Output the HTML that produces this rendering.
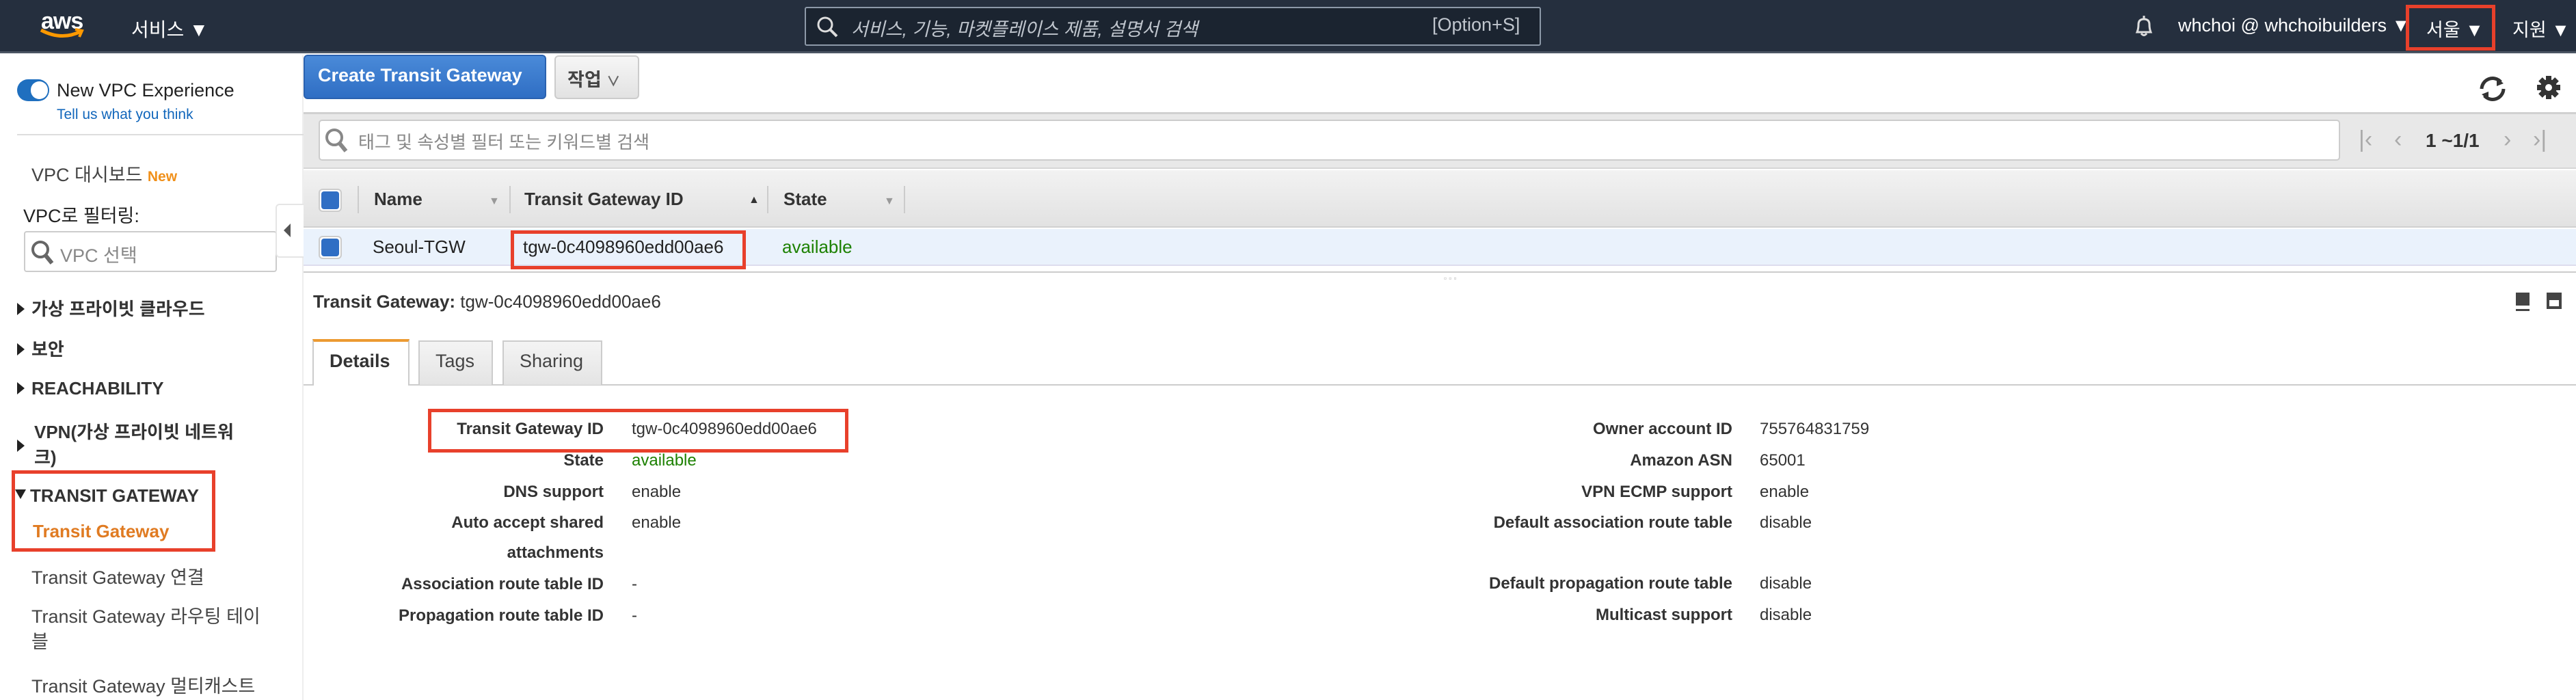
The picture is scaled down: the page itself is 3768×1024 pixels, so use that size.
<!DOCTYPE html>
<html><head><meta charset="utf-8"><style>
*{margin:0;padding:0;box-sizing:border-box}
body{width:3768px;height:1024px;overflow:hidden;background:#fff;font-family:"Liberation Sans","Noto Sans CJK KR",sans-serif;color:#222;position:relative}
.a{position:absolute;white-space:nowrap}
.nav{left:0;top:0;width:3768px;height:78px;background:#252f3e;border-bottom:3px solid #4b5563}
.w{color:#fff}
.side{left:0;top:81px;width:444px;height:943px;border-right:2px solid #eee}
.si{font-size:27px;color:#444}
.sb{font-size:26px;font-weight:bold;color:#333}
.tri{display:inline-block;width:0;height:0;border-top:9px solid transparent;border-bottom:9px solid transparent;border-left:11px solid #222;margin-right:10px}
.red{border:5px solid #e8402b}
.lbl{font-size:24px;font-weight:bold;color:#333;text-align:right}
.val{font-size:24px;color:#333}
</style></head><body>
<div class="a nav"></div>
<div class="a w" style="left:60px;top:12px;font-size:34px;font-weight:bold;letter-spacing:-1px">aws</div>
<svg class="a" style="left:56px;top:40px" width="70" height="20"><path d="M4 4 Q34 20 62 6" stroke="#f90" stroke-width="5" fill="none"/><path d="M54 3 L64 5 L60 14" stroke="#f90" stroke-width="4" fill="none"/></svg>
<div class="a w" style="left:192px;top:22px;font-size:28px">서비스 ▼</div>
<div class="a" style="left:1177px;top:10px;width:1077px;height:57px;border:2px solid #8d99a8;border-radius:3px;background:#1b2430"></div>
<svg class="a" style="left:1193px;top:22px" width="34" height="34"><circle cx="14" cy="14" r="10" stroke="#ddd" stroke-width="3" fill="none"/><path d="M21 21 L31 31" stroke="#ddd" stroke-width="4"/></svg>
<div class="a" style="left:1245px;top:21px;font-size:27px;color:#c0c6ce;font-style:italic">서비스, 기능, 마켓플레이스 제품, 설명서 검색</div>
<div class="a" style="left:2095px;top:21px;font-size:27px;color:#c0c6ce">[Option+S]</div>
<svg class="a" style="left:3118px;top:20px" width="36" height="36"><path d="M18 3 L18 7 M8 27 Q10 22 10 16 Q10 8 18 8 Q26 8 26 16 Q26 22 28 27 Z M14 29 Q18 34 22 29" stroke="#ddd" stroke-width="3" fill="none"/></svg>
<div class="a w" style="left:3186px;top:22px;font-size:27px">whchoi @ whchoibuilders ▼</div>
<div class="a red" style="left:3519px;top:7px;width:131px;height:67px"></div>
<div class="a w" style="left:3549px;top:22px;font-size:27px">서울 ▼</div>
<div class="a w" style="left:3675px;top:22px;font-size:27px">지원 ▼</div>

<div class="a side"></div>
<div class="a" style="left:25px;top:116px;width:47px;height:32px;border-radius:16px;background:#1f6fbf"></div>
<div class="a" style="left:45px;top:119px;width:25px;height:26px;border-radius:13px;background:#fff"></div>
<div class="a" style="left:83px;top:117px;font-size:27px;color:#222">New VPC Experience</div>
<div class="a" style="left:83px;top:156px;font-size:21px;color:#1166bb">Tell us what you think</div>
<div class="a" style="left:25px;top:196px;width:419px;height:2px;background:#ddd"></div>
<div class="a si" style="left:46px;top:234px">VPC 대시보드 <span style="color:#f0901a;font-size:21px;font-weight:bold">New</span></div>
<div class="a si" style="left:34px;top:294px;color:#222">VPC로 필터링:</div>
<div class="a" style="left:35px;top:338px;width:370px;height:60px;border:2px solid #ccc;border-radius:4px"></div>
<svg class="a" style="left:44px;top:350px" width="36" height="40"><circle cx="15" cy="15" r="11" stroke="#666" stroke-width="4" fill="none"/><path d="M23 24 L32 35" stroke="#666" stroke-width="6"/></svg>
<div class="a" style="left:88px;top:352px;font-size:27px;color:#888">VPC 선택</div>
<div class="a" style="left:403px;top:298px;width:42px;height:79px;border:2px solid #e5e5e5;border-right:none;border-radius:6px 0 0 6px;background:#fff"></div>
<div class="a" style="left:415px;top:327px;width:0;height:0;border-top:10px solid transparent;border-bottom:10px solid transparent;border-right:10px solid #555"></div>

<div class="a sb" style="left:25px;top:432px"><span class="tri"></span>가상 프라이빗 클라우드</div>
<div class="a sb" style="left:25px;top:491px"><span class="tri"></span>보안</div>
<div class="a sb" style="left:25px;top:553px"><span class="tri"></span>REACHABILITY</div>
<div class="a sb" style="left:25px;top:614px;line-height:37px"><span class="tri" style="position:absolute;left:0;top:29px"></span><span style="margin-left:25px">VPN(가상 프라이빗 네트워</span><br><span style="margin-left:25px">크)</span></div>
<div class="a red" style="left:17px;top:688px;width:298px;height:119px"></div>
<div class="a sb" style="left:22px;top:710px"><span style="display:inline-block;border-left:8px solid transparent;border-right:8px solid transparent;border-top:14px solid #222;vertical-align:4px;margin-right:6px"></span>TRANSIT GATEWAY</div>
<div class="a sb" style="left:48px;top:762px;color:#e07b22">Transit Gateway</div>
<div class="a si" style="left:46px;top:823px">Transit Gateway 연결</div>
<div class="a si" style="left:46px;top:884px;line-height:37px">Transit Gateway 라우팅 테이<br>블</div>
<div class="a si" style="left:46px;top:982px">Transit Gateway 멀티캐스트</div>

<div class="a" style="left:444px;top:80px;width:355px;height:65px;border-radius:6px;background:linear-gradient(#4a8ad8,#2f6ec4);border:2px solid #2a62b0"></div>
<div class="a" style="left:465px;top:95px;font-size:27px;font-weight:bold;color:#fff">Create Transit Gateway</div>
<div class="a" style="left:811px;top:81px;width:124px;height:64px;border-radius:6px;background:linear-gradient(#f6f6f6,#e2e2e2);border:2px solid #ccc"></div>
<div class="a" style="left:830px;top:95px;font-size:27px;font-weight:bold;color:#444">작업 <span style="font-size:20px;color:#666">∨</span></div>
<svg class="a" style="left:3622px;top:108px" width="48" height="44"><path d="M8 22 A16 16 0 0 1 36 12" stroke="#333" stroke-width="5" fill="none"/><path d="M30 6 L40 14 L30 18Z" fill="#333"/><path d="M40 22 A16 16 0 0 1 12 32" stroke="#333" stroke-width="5" fill="none"/><path d="M18 38 L8 30 L18 26Z" fill="#333"/></svg>
<svg class="a" style="left:3708px;top:108px" width="40" height="40"><g transform="translate(20,20)" fill="#333"><circle r="12"/><rect x="-4" y="-17" width="8" height="34"/><rect x="-4" y="-17" width="8" height="34" transform="rotate(45)"/><rect x="-4" y="-17" width="8" height="34" transform="rotate(90)"/><rect x="-4" y="-17" width="8" height="34" transform="rotate(135)"/></g><circle cx="20" cy="20" r="5" fill="#fff"/></svg>

<div class="a" style="left:444px;top:164px;width:3324px;height:83px;background:#e8e8e8;border-top:3px solid #d0d0d0;border-bottom:2px solid #d6d6d6"></div>
<div class="a" style="left:466px;top:175px;width:2957px;height:60px;background:#fff;border:2px solid #ccc;border-radius:5px"></div>
<svg class="a" style="left:474px;top:186px" width="36" height="40"><circle cx="15" cy="15" r="11" stroke="#888" stroke-width="4" fill="none"/><path d="M23 24 L32 35" stroke="#888" stroke-width="6"/></svg>
<div class="a" style="left:524px;top:188px;font-size:26px;color:#888">태그 및 속성별 필터 또는 키워드별 검색</div>
<div class="a" style="left:3450px;top:185px;font-size:34px;color:#aaa">|‹</div>
<div class="a" style="left:3502px;top:185px;font-size:34px;color:#aaa">‹</div>
<div class="a" style="left:3548px;top:190px;font-size:28px;font-weight:bold;color:#333">1 ~1/1</div>
<div class="a" style="left:3662px;top:185px;font-size:34px;color:#aaa">›</div>
<div class="a" style="left:3705px;top:185px;font-size:34px;color:#aaa">›|</div>

<div class="a" style="left:444px;top:249px;width:3324px;height:84px;background:linear-gradient(#f2f2f2,#e2e2e2);border-bottom:2px solid #d0d0d0"></div>
<div class="a" style="left:466px;top:276px;width:34px;height:34px;border:2px solid #ccc;border-radius:6px;background:#fff"></div>
<div class="a" style="left:470px;top:280px;width:26px;height:26px;border-radius:4px;background:#2f6ec4"></div>
<div class="a" style="left:523px;top:272px;width:2px;height:40px;background:#ccc"></div>
<div class="a" style="left:547px;top:276px;font-size:26px;font-weight:bold;color:#333">Name</div>
<div class="a" style="left:715px;top:286px;font-size:16px;color:#999">▼</div>
<div class="a" style="left:745px;top:272px;width:2px;height:40px;background:#ccc"></div>
<div class="a" style="left:767px;top:276px;font-size:26px;font-weight:bold;color:#333">Transit Gateway ID</div>
<div class="a" style="left:1095px;top:284px;font-size:16px;color:#333">▲</div>
<div class="a" style="left:1122px;top:272px;width:2px;height:40px;background:#ccc"></div>
<div class="a" style="left:1146px;top:276px;font-size:26px;font-weight:bold;color:#333">State</div>
<div class="a" style="left:1293px;top:286px;font-size:16px;color:#999">▼</div>
<div class="a" style="left:1322px;top:272px;width:2px;height:40px;background:#ccc"></div>

<div class="a" style="left:444px;top:335px;width:3324px;height:54px;background:#eaf2fc;border-bottom:2px solid #dde"></div>
<div class="a" style="left:466px;top:345px;width:34px;height:34px;border:2px solid #ccc;border-radius:6px;background:#fff"></div>
<div class="a" style="left:470px;top:349px;width:26px;height:26px;border-radius:4px;background:#2f6ec4"></div>
<div class="a" style="left:545px;top:346px;font-size:26px;color:#222">Seoul-TGW</div>
<div class="a red" style="left:747px;top:337px;width:344px;height:57px"></div>
<div class="a" style="left:765px;top:346px;font-size:26px;color:#222">tgw-0c4098960edd00ae6</div>
<div class="a" style="left:1144px;top:346px;font-size:26px;color:#1d8102">available</div>
<div class="a" style="left:444px;top:397px;width:3324px;height:2px;background:#ccc"></div>
<div class="a" style="left:2112px;top:400px;font-size:12px;color:#bbb;letter-spacing:3px">▫▫▫</div>

<div class="a" style="left:458px;top:426px;font-size:26px;color:#333"><b>Transit Gateway:</b> tgw-0c4098960edd00ae6</div>
<div class="a" style="left:3680px;top:428px;width:20px;height:24px;background:#444;border-bottom:5px solid #fff;box-shadow:0 3px 0 #444"></div>
<div class="a" style="left:3725px;top:428px;width:22px;height:24px;background:#444"></div>
<div class="a" style="left:3729px;top:439px;width:14px;height:9px;background:#fff"></div>

<div class="a" style="left:444px;top:562px;width:3324px;height:2px;background:#ccc"></div>
<div class="a" style="left:457px;top:496px;width:142px;height:68px;background:#fff;border:2px solid #ccc;border-top:4px solid #ec9a32;border-bottom:none"></div>
<div class="a" style="left:482px;top:513px;font-size:27px;font-weight:bold;color:#333">Details</div>
<div class="a" style="left:612px;top:498px;width:109px;height:65px;background:linear-gradient(#f4f4f4,#e4e4e4);border:2px solid #ccc;border-bottom:none"></div>
<div class="a" style="left:637px;top:513px;font-size:27px;color:#444">Tags</div>
<div class="a" style="left:735px;top:498px;width:146px;height:65px;background:linear-gradient(#f4f4f4,#e4e4e4);border:2px solid #ccc;border-bottom:none"></div>
<div class="a" style="left:760px;top:513px;font-size:27px;color:#444">Sharing</div>

<div class="a red" style="left:626px;top:598px;width:615px;height:64px"></div>
<div class="a lbl" style="right:2885px;top:614px">Transit Gateway ID</div>
<div class="a lbl" style="right:2885px;top:660px">State</div>
<div class="a lbl" style="right:2885px;top:706px">DNS support</div>
<div class="a lbl" style="right:2885px;top:751px">Auto accept shared</div>
<div class="a lbl" style="right:2885px;top:795px">attachments</div>
<div class="a lbl" style="right:2885px;top:841px">Association route table ID</div>
<div class="a lbl" style="right:2885px;top:887px">Propagation route table ID</div>
<div class="a val" style="left:924px;top:614px">tgw-0c4098960edd00ae6</div>
<div class="a val" style="left:924px;top:660px;color:#1d8102">available</div>
<div class="a val" style="left:924px;top:706px">enable</div>
<div class="a val" style="left:924px;top:751px">enable</div>
<div class="a val" style="left:924px;top:841px">-</div>
<div class="a val" style="left:924px;top:887px">-</div>

<div class="a lbl" style="right:1234px;top:614px">Owner account ID</div>
<div class="a lbl" style="right:1234px;top:660px">Amazon ASN</div>
<div class="a lbl" style="right:1234px;top:706px">VPN ECMP support</div>
<div class="a lbl" style="right:1234px;top:751px">Default association route table</div>
<div class="a lbl" style="right:1234px;top:840px">Default propagation route table</div>
<div class="a lbl" style="right:1234px;top:886px">Multicast support</div>
<div class="a val" style="left:2574px;top:614px">755764831759</div>
<div class="a val" style="left:2574px;top:660px">65001</div>
<div class="a val" style="left:2574px;top:706px">enable</div>
<div class="a val" style="left:2574px;top:751px">disable</div>
<div class="a val" style="left:2574px;top:840px">disable</div>
<div class="a val" style="left:2574px;top:886px">disable</div>
</body></html>
